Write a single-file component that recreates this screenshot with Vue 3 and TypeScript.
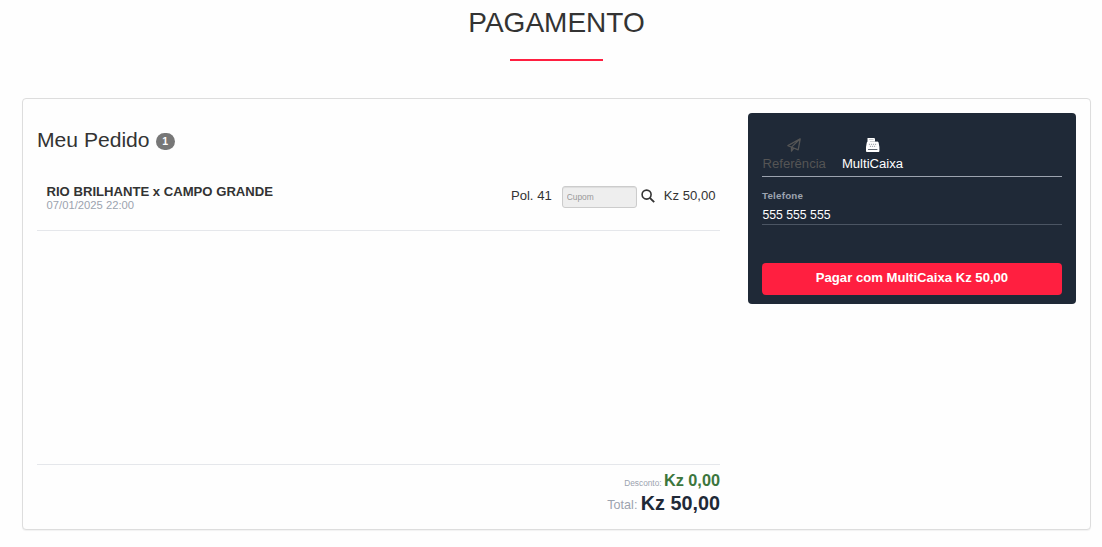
<script setup lang="ts">
import { ref, computed } from 'vue'

interface Pedido {
  id: number;
  jogo: string;
  data: string;
  poltrona: string;
  preco: number;
}

const pedidos = ref<Pedido[]>([
  { id: 1, jogo: 'RIO BRILHANTE x CAMPO GRANDE', data: '07/01/2025 22:00', poltrona: 'Pol. 41', preco: 50 }
])
const desconto = ref<number>(0)
const metodo = ref<'referencia' | 'multicaixa'>('multicaixa')
const telefone = ref<string>('555 555 555')
const cupom = ref<string>('')

const total = computed(() => pedidos.value.reduce((soma, p) => soma + p.preco, 0) - desconto.value)
const formatar = (valor: number) => `Kz ${valor.toFixed(2).replace('.', ',')}`
</script>

<template>
  <main class="page">
    <h1 class="title">PAGAMENTO</h1>
    <div class="title-line"></div>

    <div class="card">
      <section class="order">
        <h2 class="order-title">Meu Pedido <span class="badge">{{ pedidos.length }}</span></h2>
        <div class="items">
          <div class="item" v-for="pedido in pedidos" :key="pedido.id">
            <div class="game">
              <div class="game-name">{{ pedido.jogo }}</div>
              <div class="game-date">{{ pedido.data }}</div>
            </div>
            <span class="seat">{{ pedido.poltrona }}</span>
            <input class="coupon" v-model="cupom" placeholder="Cupom" />
            <svg class="search" viewBox="0 0 14 14">
              <circle cx="5.6" cy="5.6" r="4.5" fill="none" stroke="currentColor" stroke-width="1.6" />
              <path d="M8.8 8.8 13.2 13.2" fill="none" stroke="currentColor" stroke-width="1.9" />
            </svg>
            <span class="price">{{ formatar(pedido.preco) }}</span>
          </div>
        </div>
        <div class="totals">
          <div class="discount"><small>Desconto:</small> <b>{{ formatar(desconto) }}</b></div>
          <div class="total"><small>Total:</small> <b>{{ formatar(total) }}</b></div>
        </div>
      </section>

      <aside class="payment">
        <div class="tabs">
          <div class="tab" :class="{ active: metodo === 'referencia' }" @click="metodo = 'referencia'">
            <svg viewBox="0 0 14 14" fill="none" stroke="currentColor" stroke-width="1.3" stroke-linejoin="round">
              <path d="M13.2 .8 .9 7.6 4.2 9 11.2 11.8ZM13.2 .8 4.5 9.1V13.2L6.8 10.2" />
            </svg>
            <span>Referência</span>
          </div>
          <div class="tab" :class="{ active: metodo === 'multicaixa' }" @click="metodo = 'multicaixa'">
            <svg viewBox="0 0 14 14">
              <path fill="currentColor" d="M1.5 0H8.2L9 .8V3.6H11.8L12.6 4.6 13.4 9V13.2L12.8 13.9H.6L0 13.2V9L.8 4.6 1.5 3.6Z" />
              <path d="M3 1.6H7.5" stroke="#1f2937" stroke-width=".7" opacity=".35" />
              <path d="M4 3.5H12" stroke="#1f2937" stroke-width=".6" opacity=".35" />
              <path d="M2.9 6.3H11.1M3.9 8.3H10.1" stroke="#1f2937" stroke-width=".9" stroke-dasharray="1 1" opacity=".6" />
              <path d="M2 11.5H11.4" stroke="#1f2937" stroke-width=".9" opacity=".8" />
            </svg>
            <span>MultiCaixa</span>
          </div>
        </div>
        <label class="phone">
          <span>Telefone</span>
          <input v-model="telefone" />
        </label>
        <button class="pay">Pagar com MultiCaixa {{ formatar(total) }}</button>
      </aside>
    </div>
  </main>
</template>

<style>
body {
  margin: 0;
  background: #fefefe;
}
</style>

<style scoped>
.page {
  height: 547px;
  padding: 0 11px 0 22px;
  box-sizing: border-box;
  overflow: hidden;
  font-family: "Liberation Sans", Arial, sans-serif;
  font-size: 13.125px;
  color: #333;
}

.title {
  margin: 0;
  padding-top: 7px;
  font-size: 28px;
  font-weight: 400;
  line-height: 32px;
  text-align: center;
}

.title-line {
  width: 93px;
  height: 2px;
  margin: 20px auto 37px;
  background: #ff1f40;
}

.card {
  display: flex;
  gap: 28px;
  height: 432px;
  padding: 14px;
  box-sizing: border-box;
  border: 1px solid #ddd;
  border-radius: 4px;
  background: #fefefe;
  box-shadow: 0 1px 1px rgba(0, 0, 0, .05);
}

.order {
  flex: 1;
  display: flex;
  flex-direction: column;
}

.order-title {
  display: flex;
  align-items: center;
  gap: 6px;
  margin: 15px 0 17px;
  font-size: 21.1px;
  font-weight: 400;
  line-height: 24px;
}

.badge {
  height: 17px;
  width: 19px;
  margin-top: 3px;
  border-radius: 10px;
  background: #777;
  color: #fff;
  font-size: 10.5px;
  font-weight: 700;
  line-height: 17px;
  text-align: center;
}

.items {
  flex: 1;
}

.item {
  display: flex;
  align-items: center;
  height: 62px;
  padding: 0 4.5px 9px 9.5px;
  box-sizing: border-box;
  border-bottom: 1px solid #e5e7eb;
}

.game {
  flex: 1;
  padding-top: 6px;
}

.game-name {
  font-weight: 700;
  line-height: 15px;
}

.game-date {
  color: #9ca3af;
  font-size: 11.25px;
  line-height: 13px;
}

.coupon {
  width: 75px;
  height: 22px;
  margin: 3px 4px 0 10px;
  padding: 0 4px;
  box-sizing: border-box;
  border: 1px solid #ccc;
  border-radius: 3px;
  background: #eee;
  box-shadow: inset 0 1px 1px rgba(0, 0, 0, .075);
  font-family: inherit;
  font-size: 8.4px;
}

.coupon::placeholder {
  color: #999;
}

.search {
  width: 14px;
  height: 14px;
  margin: 2px 9px 0 0;
}

.totals {
  height: 50px;
  border-top: 1px solid #e5e7eb;
  text-align: right;
}

.totals small {
  color: #9ca3af;
}

.discount {
  height: 25px;
  padding-top: 5px;
  box-sizing: border-box;
  font-size: 8.2px;
  line-height: 20px;
}

.discount small {
  font-size: 8.3px;
}

.discount b {
  color: #3c763d;
  font-size: 16.3px;
}

.total {
  padding-top: 1px;
  color: #1f2937;
  font-size: 12.25px;
  line-height: 24px;
}

.total small {
  font-size: 12.6px;
  vertical-align: 1px;
}

.total b {
  font-size: 19.8px;
}

.payment {
  width: 328px;
  height: 191px;
  padding: 23px 14px 0;
  box-sizing: border-box;
  border-radius: 4px;
  background: #1f2937;
  color: #fff;
}

.tabs {
  display: flex;
  gap: 16px;
  height: 41px;
  padding-left: .5px;
  box-sizing: border-box;
  border-bottom: 1px solid #9ca3af;
}

.tab {
  display: flex;
  flex-direction: column;
  align-items: center;
  padding-top: 2px;
  color: #555;
  line-height: 15px;
  cursor: pointer;
}

.tab.active {
  color: #fff;
}

.tab svg {
  width: 14px;
  height: 14px;
  margin-bottom: 4px;
}

.phone {
  display: block;
  height: 48px;
  padding-top: 13px;
  box-sizing: border-box;
  border-bottom: 1px solid #4b5563;
}

.phone span {
  display: block;
  color: #9ca3af;
  font-size: 9.8px;
  font-weight: 700;
  letter-spacing: .2px;
  line-height: 12px;
}

.phone input {
  display: block;
  width: 100%;
  height: 16px;
  margin-top: 5px;
  padding: 0 0 0 .4px;
  border: 0;
  background: none;
  color: #fff;
  font-family: inherit;
  font-size: 12.25px;
  outline: none;
}

.pay {
  display: block;
  width: 100%;
  height: 32px;
  margin-top: 38px;
  padding: 0 0 3px;
  border: 0;
  border-radius: 4px;
  background: #ff1f40;
  color: #fff;
  font-family: inherit;
  font-size: 13.125px;
  font-weight: 700;
  cursor: pointer;
}
</style>
